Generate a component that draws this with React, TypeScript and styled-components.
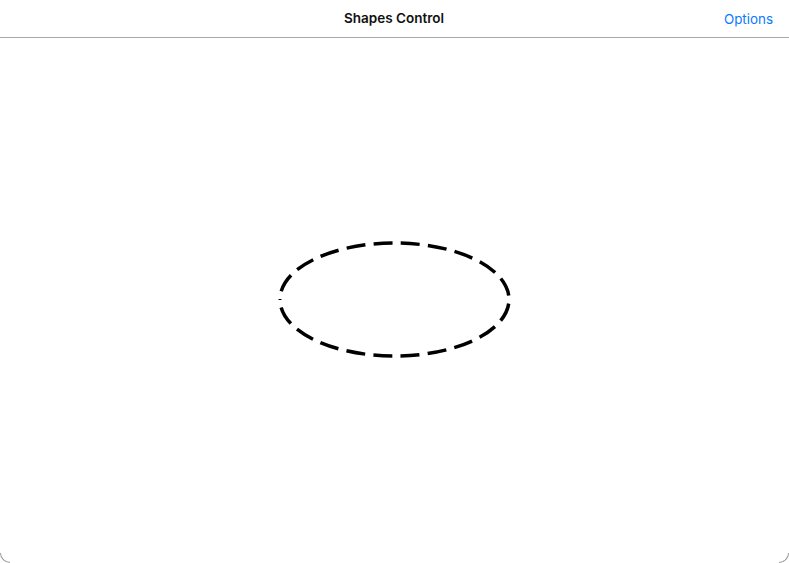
import React from "react";
import styled, { createGlobalStyle } from "styled-components";

const Global = createGlobalStyle`
  html, body { margin: 0; padding: 0; background: #fff; }
  body { font-family: "Inter", "Liberation Sans", sans-serif; }
`;

const Frame = styled.div`
  width: 789px;
  height: 563px;
  box-sizing: border-box;
  display: flex;
  flex-direction: column;
  background: #fff;
  position: relative;

  &::before,
  &::after {
    content: "";
    position: absolute;
    bottom: 0;
    width: 10px;
    height: 10px;
    box-sizing: border-box;
    border-bottom: 1px solid #9a9a9a;
  }
  &::before {
    left: 0;
    border-left: 1px solid #9a9a9a;
    border-bottom-left-radius: 10px;
  }
  &::after {
    right: 0;
    border-right: 1px solid #9a9a9a;
    border-bottom-right-radius: 10px;
  }
`;

const NavBar = styled.div`
  height: 37px;
  flex: none;
  display: grid;
  grid-template-columns: 1fr auto 1fr;
  align-items: center;
  border-bottom: 1px solid #a9a9a9;
  padding: 0 16px 0 15px;
`;

const Title = styled.div`
  grid-column: 2;
  font-size: 13.5px;
  font-weight: 600;
  color: #111;
  padding-bottom: 1px;
`;

const NavButton = styled.button`
  grid-column: 3;
  justify-self: end;
  background: none;
  border: none;
  padding: 0;
  font-family: inherit;
  font-size: 13.4px;
  color: #0a7aff;
  margin-top: 1px;
`;

const Canvas = styled.div`
  flex: 1;
  position: relative;
`;

const ShapeSvg = styled.svg`
  position: absolute;
  left: 0;
  top: 0;
`;

export default function App() {
  const cx = 394.5;
  const cy = 261.5;
  const rx = 114.5;
  const ry = 56.5;
  const d = `M ${cx - rx} ${cy} A ${rx} ${ry} 0 1 1 ${cx + rx} ${cy} A ${rx} ${ry} 0 1 1 ${cx - rx} ${cy}`;
  return (
    <>
      <Global />
      <Frame>
        <NavBar>
          <Title>Shapes Control</Title>
          <NavButton>Options</NavButton>
        </NavBar>
        <Canvas>
          <ShapeSvg width="789" height="525" viewBox="0 0 789 525">
            <path
              d={d}
              fill="none"
              stroke="#000"
              strokeWidth={3.5}
              strokeDasharray="18.9 8.3"
              strokeDashoffset={-8.35}
            />
            <line x1={cx - rx - 1.5} y1={cy} x2={cx - rx + 1.5} y2={cy} stroke="#000" strokeWidth={1} />
          </ShapeSvg>
        </Canvas>
      </Frame>
    </>
  );
}
